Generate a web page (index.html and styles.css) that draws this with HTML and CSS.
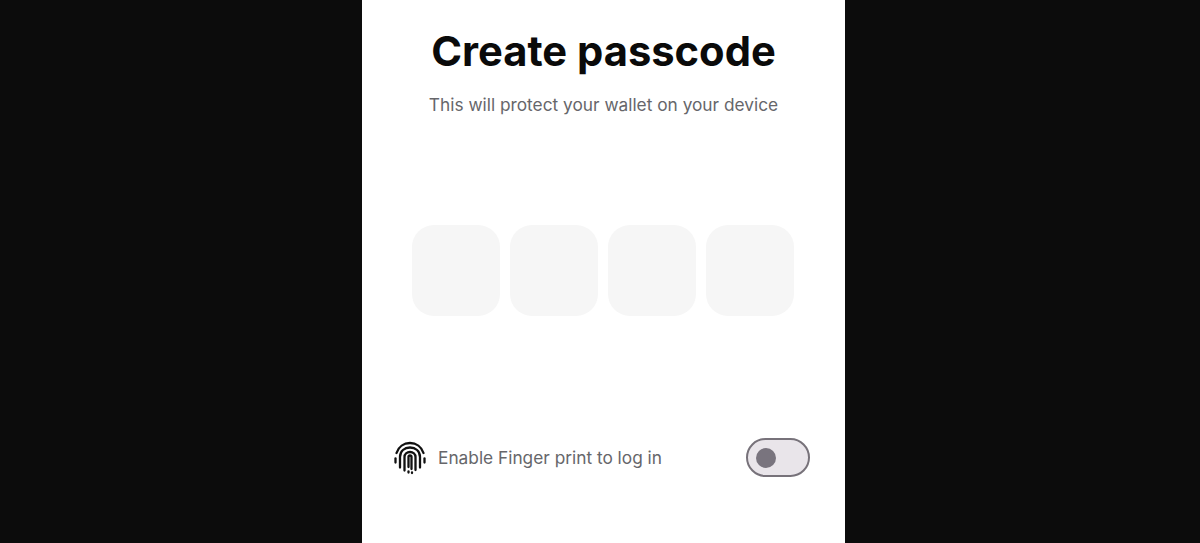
FILE: index.html
```html
<!DOCTYPE html>
<html lang="en">
<head>
    <meta charset="UTF-8">
    <meta name="viewport" content="width=device-width, initial-scale=1.0">
    <title>Create passcode</title>
    <link rel="stylesheet" href="styles.css">
</head>
<body>

<main class="phone">
    <h1>Create passcode</h1>
    <p class="subtitle">This will protect your wallet on your device</p>

    <div class="code-boxes">
        <div class="code-box"></div>
        <div class="code-box"></div>
        <div class="code-box"></div>
        <div class="code-box"></div>
    </div>

    <div class="finger-row">
        <svg class="finger-icon" viewBox="0 0 34 34" fill="none" stroke="#111" stroke-width="2.300" stroke-linecap="round">
            <path d="M2.500 21.500v-4"/>
            <path d="M3.500 12C5.500 5.500 11 2 17 2s11.500 3.500 13.500 10"/>
            <path d="M31.500 17.500v4"/>
            <path d="M7 26.500v-10.500C7 10 11.500 6.500 17 6.500S27 10 27 16v10.500"/>
            <path d="M11.500 29.500V16c0-3 2.500-5 5.500-5s5.500 2 5.500 5v13"/>
            <path d="M15.500 26v-10c0-1 .6-1.500 1.500-1.500s1.500.5 1.500 1.500v12"/>
            <path d="M15.500 30.500v1"/>
            <path d="M19 31.500v.5"/>
        </svg>
        <span class="finger-label">Enable Finger print to log in</span>
        <div class="toggle">
            <div class="toggle-knob"></div>
        </div>
    </div>
</main>

</body>
</html>
```

FILE: styles.css
```css
body {
    margin: 0;
    height: 543px;
    overflow: hidden;
    background-color: #0c0c0c;
    font-family: 'Inter', 'Liberation Sans', sans-serif;
}

.phone {
    width: 483px;
    height: 543px;
    margin-left: 362px;
    background-color: #fff;
    box-sizing: border-box;
    padding-top: 27px;
    text-align: center;
}

h1 {
    margin: 0;
    font-size: 41.700px;
    line-height: 48px;
    font-weight: 700;
    color: #0a0a0a;
}

.subtitle {
    margin: 18px 0 0 0;
    font-size: 17.300px;
    line-height: 24px;
    color: #66666a;
}

.code-boxes {
    display: flex;
    gap: 10px;
    margin: 108px 0 0 50px;
}

.code-box {
    width: 88px;
    height: 91px;
    background-color: #f6f6f6;
    border-radius: 22px;
}

.finger-row {
    display: flex;
    align-items: center;
    margin-top: 122px;
    padding: 0 35px 0 31px;
}

.finger-icon {
    width: 34px;
    height: 34px;
    flex-shrink: 0;
}

.finger-label {
    margin-left: 11px;
    font-size: 17.300px;
    line-height: 24px;
    color: #66666a;
}

.toggle {
    margin-left: auto;
    width: 64px;
    height: 39px;
    box-sizing: border-box;
    border: 2.500px solid #77727a;
    border-radius: 20px;
    background-color: #e9e5ea;
    display: flex;
    align-items: center;
    padding-left: 8px;
}

.toggle-knob {
    width: 20px;
    height: 20px;
    border-radius: 50%;
    background-color: #79747e;
}
```
